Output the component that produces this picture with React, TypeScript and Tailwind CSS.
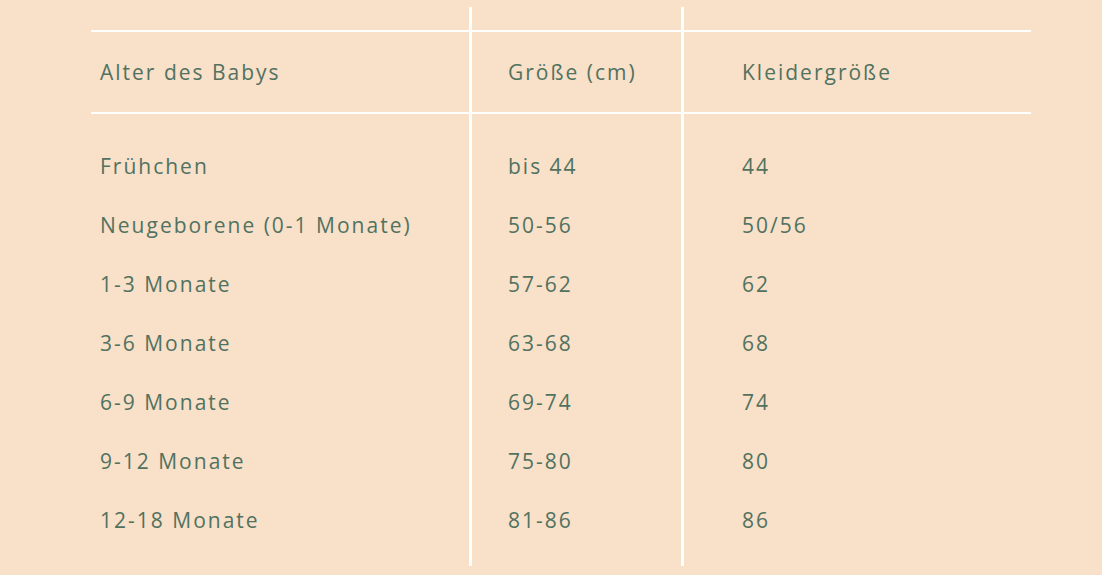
const rows = [
  ['Frühchen', 'bis 44', '44'],
  ['Neugeborene (0-1 Monate)', '50-56', '50/56'],
  ['1-3 Monate', '57-62', '62'],
  ['3-6 Monate', '63-68', '68'],
  ['6-9 Monate', '69-74', '74'],
  ['9-12 Monate', '75-80', '80'],
  ['12-18 Monate', '81-86', '86'],
]

const headers = ['Alter des Babys', 'Größe (cm)', 'Kleidergröße']

const cols = [
  { w: 'w-[381px] border-r-[3px] border-white', pad: 'pl-[9px]' },
  { w: 'w-[212px] border-r-[3px] border-white', pad: 'pl-[36px]' },
  { w: 'w-[347px]', pad: 'pl-[58px]' },
]

export default function App() {
  return (
    <main
      className="h-[575px] w-[1102px] bg-[#f8e0c9] pl-[91px] pt-[7px] text-[#51725f]"
      style={{ fontFamily: '"Open Sans", Lato, sans-serif' }}
    >
      <div className="flex">
        {cols.map((c, ci) => (
          <div key={ci} className={`flex h-[559px] flex-col ${c.w}`}>
            <div className="h-[23px]" />
            <div className={`flex h-[84px] items-center border-y-2 border-white pt-[2px] text-[21px] tracking-[2px] ${c.pad}`}>
              {headers[ci]}
            </div>
            <div className="pt-[23px]">
              {rows.map((r, ri) => (
                <div key={ri} className={`flex h-[59px] items-center text-[21px] tracking-[2px] ${c.pad}`}>
                  {r[ci]}
                </div>
              ))}
            </div>
          </div>
        ))}
      </div>
    </main>
  )
}
